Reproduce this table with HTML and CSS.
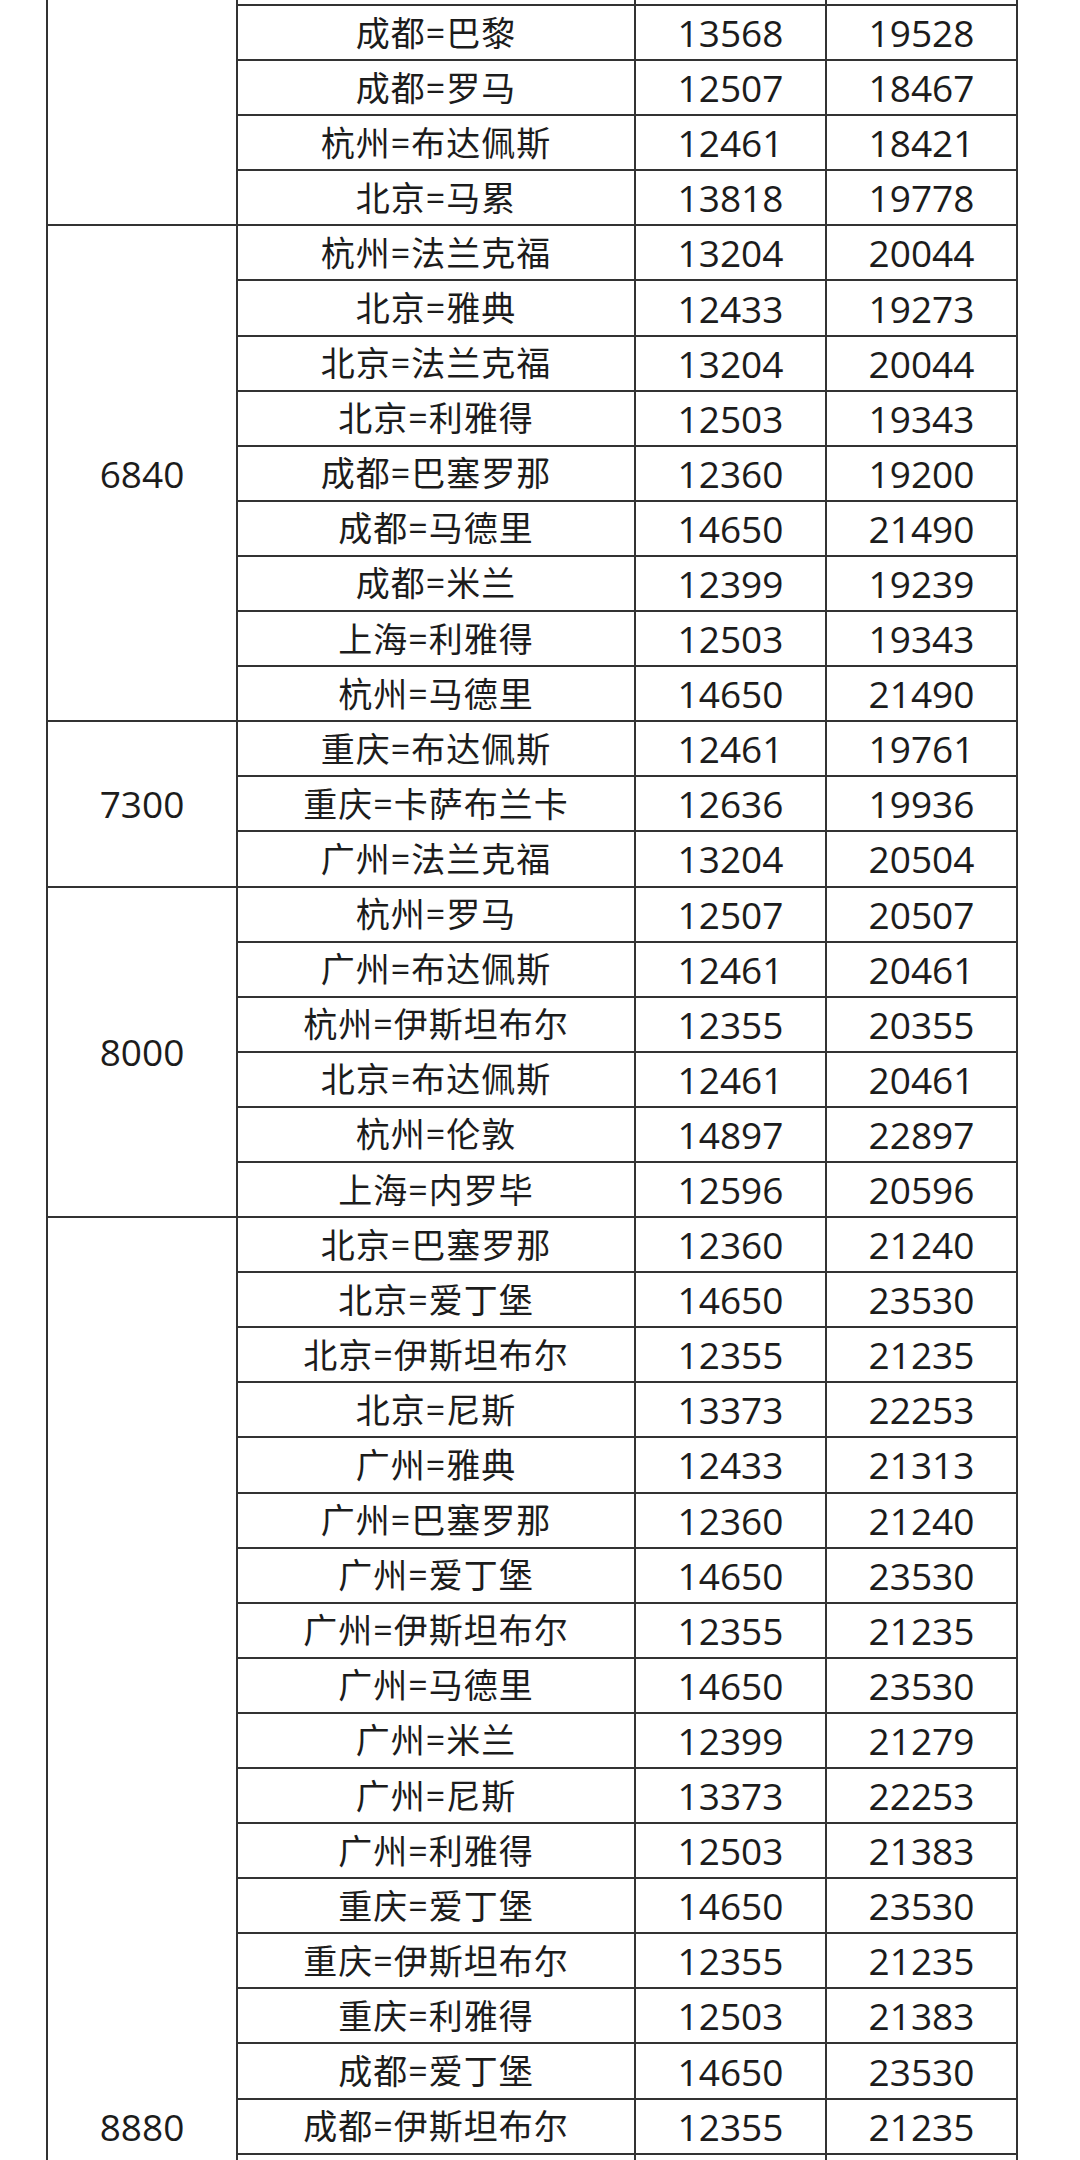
FILE: index.html
```html
<!DOCTYPE html>
<html lang="zh-CN">
<head>
<meta charset="utf-8">
<title>票价表</title>
<link rel="stylesheet" href="styles.css">
</head>
<body>
<div class="sheet">
<table class="fares">
<colgroup>
<col class="c-price"><col class="c-route"><col class="c-num"><col class="c-num">
</colgroup>
<tbody>
<tr class="cut"><td class="price" rowspan="5"></td><td></td><td></td><td></td></tr>
<tr><td class="route">成都=巴黎</td><td class="num">13568</td><td class="num">19528</td></tr>
<tr><td class="route">成都=罗马</td><td class="num">12507</td><td class="num">18467</td></tr>
<tr><td class="route">杭州=布达佩斯</td><td class="num">12461</td><td class="num">18421</td></tr>
<tr><td class="route">北京=马累</td><td class="num">13818</td><td class="num">19778</td></tr>

<tr><td class="price" rowspan="9">6840</td><td class="route">杭州=法兰克福</td><td class="num">13204</td><td class="num">20044</td></tr>
<tr><td class="route">北京=雅典</td><td class="num">12433</td><td class="num">19273</td></tr>
<tr><td class="route">北京=法兰克福</td><td class="num">13204</td><td class="num">20044</td></tr>
<tr><td class="route">北京=利雅得</td><td class="num">12503</td><td class="num">19343</td></tr>
<tr><td class="route">成都=巴塞罗那</td><td class="num">12360</td><td class="num">19200</td></tr>
<tr><td class="route">成都=马德里</td><td class="num">14650</td><td class="num">21490</td></tr>
<tr><td class="route">成都=米兰</td><td class="num">12399</td><td class="num">19239</td></tr>
<tr><td class="route">上海=利雅得</td><td class="num">12503</td><td class="num">19343</td></tr>
<tr><td class="route">杭州=马德里</td><td class="num">14650</td><td class="num">21490</td></tr>

<tr><td class="price" rowspan="3">7300</td><td class="route">重庆=布达佩斯</td><td class="num">12461</td><td class="num">19761</td></tr>
<tr><td class="route">重庆=卡萨布兰卡</td><td class="num">12636</td><td class="num">19936</td></tr>
<tr><td class="route">广州=法兰克福</td><td class="num">13204</td><td class="num">20504</td></tr>

<tr><td class="price" rowspan="6">8000</td><td class="route">杭州=罗马</td><td class="num">12507</td><td class="num">20507</td></tr>
<tr><td class="route">广州=布达佩斯</td><td class="num">12461</td><td class="num">20461</td></tr>
<tr><td class="route">杭州=伊斯坦布尔</td><td class="num">12355</td><td class="num">20355</td></tr>
<tr><td class="route">北京=布达佩斯</td><td class="num">12461</td><td class="num">20461</td></tr>
<tr><td class="route">杭州=伦敦</td><td class="num">14897</td><td class="num">22897</td></tr>
<tr><td class="route">上海=内罗毕</td><td class="num">12596</td><td class="num">20596</td></tr>

<tr><td class="price" rowspan="33">8880</td><td class="route">北京=巴塞罗那</td><td class="num">12360</td><td class="num">21240</td></tr>
<tr><td class="route">北京=爱丁堡</td><td class="num">14650</td><td class="num">23530</td></tr>
<tr><td class="route">北京=伊斯坦布尔</td><td class="num">12355</td><td class="num">21235</td></tr>
<tr><td class="route">北京=尼斯</td><td class="num">13373</td><td class="num">22253</td></tr>
<tr><td class="route">广州=雅典</td><td class="num">12433</td><td class="num">21313</td></tr>
<tr><td class="route">广州=巴塞罗那</td><td class="num">12360</td><td class="num">21240</td></tr>
<tr><td class="route">广州=爱丁堡</td><td class="num">14650</td><td class="num">23530</td></tr>
<tr><td class="route">广州=伊斯坦布尔</td><td class="num">12355</td><td class="num">21235</td></tr>
<tr><td class="route">广州=马德里</td><td class="num">14650</td><td class="num">23530</td></tr>
<tr><td class="route">广州=米兰</td><td class="num">12399</td><td class="num">21279</td></tr>
<tr><td class="route">广州=尼斯</td><td class="num">13373</td><td class="num">22253</td></tr>
<tr><td class="route">广州=利雅得</td><td class="num">12503</td><td class="num">21383</td></tr>
<tr><td class="route">重庆=爱丁堡</td><td class="num">14650</td><td class="num">23530</td></tr>
<tr><td class="route">重庆=伊斯坦布尔</td><td class="num">12355</td><td class="num">21235</td></tr>
<tr><td class="route">重庆=利雅得</td><td class="num">12503</td><td class="num">21383</td></tr>
<tr><td class="route">成都=爱丁堡</td><td class="num">14650</td><td class="num">23530</td></tr>
<tr><td class="route">成都=伊斯坦布尔</td><td class="num">12355</td><td class="num">21235</td></tr>
<tr><td></td><td></td><td></td></tr>
<tr><td></td><td></td><td></td></tr>
<tr><td></td><td></td><td></td></tr>
<tr><td></td><td></td><td></td></tr>
<tr><td></td><td></td><td></td></tr>
<tr><td></td><td></td><td></td></tr>
<tr><td></td><td></td><td></td></tr>
<tr><td></td><td></td><td></td></tr>
<tr><td></td><td></td><td></td></tr>
<tr><td></td><td></td><td></td></tr>
<tr><td></td><td></td><td></td></tr>
<tr><td></td><td></td><td></td></tr>
<tr><td></td><td></td><td></td></tr>
<tr><td></td><td></td><td></td></tr>
<tr><td></td><td></td><td></td></tr>
<tr><td></td><td></td><td></td></tr>
</tbody>
</table>
</div>
</body>
</html>
```

FILE: styles.css
```css
html, body {
  margin: 0;
  padding: 0;
  background: #ffffff;
}

.sheet {
  width: 1080px;
  height: 2160px;
  overflow: hidden;
  background: #ffffff;
}

.fares {
  border-collapse: collapse;
  table-layout: fixed;
  margin-left: 46px;
  color: #1c1c1c;
  font-family: "Open Sans", "Noto Sans CJK SC", sans-serif;
}

.c-price { width: 190px; }
.c-route { width: 398px; }
.c-num { width: 191px; }

.fares td {
  border: 2px solid #333333;
  padding: 0;
  height: 53.1px;
  text-align: center;
  vertical-align: middle;
  line-height: 1;
}

.fares .cut td {
  height: 4px;
  border-top: hidden;
}

.fares .route {
  font-size: 34px;
  letter-spacing: 1px;
}

.fares .num,
.fares .price {
  font-size: 37px;
}
```
